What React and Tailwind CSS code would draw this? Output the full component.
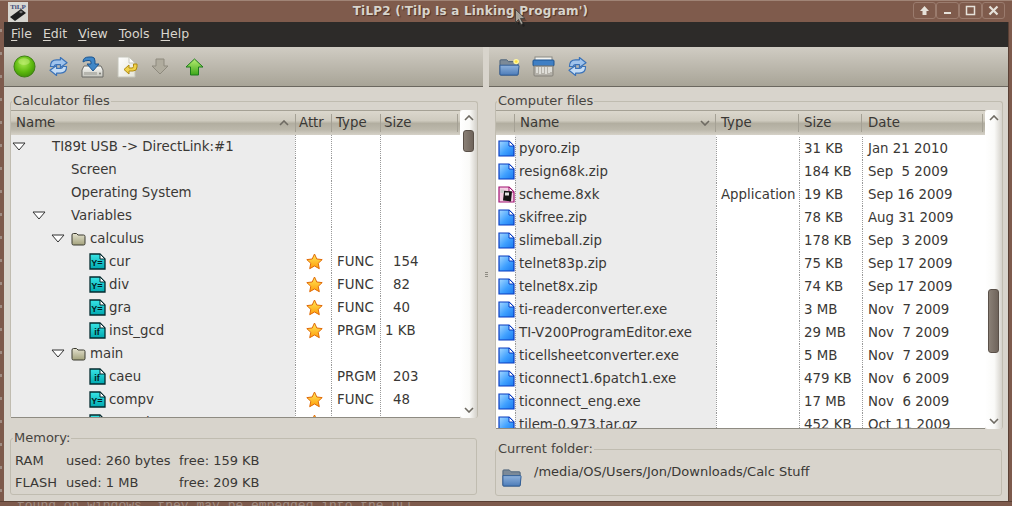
import React from "react";

function Defs() {
  return (
    <svg width="0" height="0" className="absolute">
      <defs>
        <linearGradient id="docBlue" x1="0" y1="0" x2="1" y2="1"><stop offset="0" stopColor="#a6d8ff" /><stop offset="0.55" stopColor="#3fa0ff" /><stop offset="1" stopColor="#1a78ee" /></linearGradient>
        <linearGradient id="docCyan" x1="0" y1="0" x2="0" y2="1"><stop offset="0" stopColor="#38e6e6" /><stop offset="1" stopColor="#00a8b0" /></linearGradient>
        <linearGradient id="fold" x1="0" y1="0" x2="0" y2="1"><stop offset="0" stopColor="#e4e2cf" /><stop offset="1" stopColor="#a3a27c" /></linearGradient>
        <linearGradient id="star" x1="0" y1="0" x2="0" y2="1"><stop offset="0" stopColor="#ffe95a" /><stop offset="1" stopColor="#ff9d0a" /></linearGradient>
        <radialGradient id="ball" cx="0.45" cy="0.35" r="0.7"><stop offset="0" stopColor="#a6e84c" /><stop offset="0.6" stopColor="#5cb80e" /><stop offset="1" stopColor="#3d8a08" /></radialGradient>
        <linearGradient id="arrowUp" x1="0" y1="0" x2="0" y2="1"><stop offset="0" stopColor="#b8ee72" /><stop offset="1" stopColor="#3da618" /></linearGradient>
        <linearGradient id="blueFolder" x1="0" y1="0" x2="0" y2="1"><stop offset="0" stopColor="#8fb2dc" /><stop offset="1" stopColor="#4d7cb8" /></linearGradient>
        <linearGradient id="paper" x1="0" y1="0" x2="1" y2="1"><stop offset="0" stopColor="#ffffff" /><stop offset="1" stopColor="#e4e4d8" /></linearGradient>
        <linearGradient id="drive" x1="0" y1="0" x2="0" y2="1"><stop offset="0" stopColor="#fbfbf8" /><stop offset="1" stopColor="#c4c4bc" /></linearGradient>
      </defs>
    </svg>
  );
}

function DocBlue() {
  return (
    <svg width="17" height="17" viewBox="0 0 17 17" className="shrink-0">
      <path d="M1 1h10l5 5v10H1z" fill="url(#docBlue)" stroke="#0a3cc0" strokeWidth="1.2" />
      <path d="M11 1v5h5z" fill="#ffffff" stroke="#0a3cc0" strokeWidth="1" />
    </svg>
  );
}
function DocCyan({ label }) {
  return (
    <svg width="17" height="17" viewBox="0 0 17 17" className="shrink-0">
      <path d="M1 1h10l5 5v10H1z" fill="url(#docCyan)" stroke="#042a2e" strokeWidth="1.3" />
      <path d="M11 1v5h5z" fill="#ffffff" stroke="#042a2e" strokeWidth="1" />
      <text x="8" y="13" textAnchor="middle" fontFamily="Liberation Sans, sans-serif" fontWeight="700" fontSize="9" fill="#021a1e">{label}</text>
    </svg>
  );
}
function Scheme() {
  return (
    <svg width="17" height="17" viewBox="0 0 17 17" className="shrink-0">
      <path d="M1 1h10l5 5v10H1z" fill="#f6d0e6" stroke="#a01070" strokeWidth="1.2" />
      <path d="M11 1v5h5z" fill="#ffffff" stroke="#a01070" strokeWidth="1" />
      <rect x="5.500" y="5" width="8" height="10" fill="#141414" transform="rotate(6 9 10)" />
      <rect x="7" y="6.500" width="4" height="3" fill="#e0e0e0" />
      <rect x="2.500" y="3.500" width="3.500" height="3.500" fill="#cccccc" />
    </svg>
  );
}
function Folder() {
  return (
    <svg width="15" height="14" viewBox="0 0 15 14" className="shrink-0">
      <path d="M1 3q0-1.500 1.500-1.500h3l1.500 1.500h5.500q1.500 0 1.500 1.500v7q0 1.500-1.500 1.500h-10q-1.500 0-1.500-1.500z" fill="url(#fold)" stroke="#3a3a30" strokeWidth="1" />
    </svg>
  );
}
function Star() {
  return (
    <svg width="17" height="17" viewBox="0 0 17 17">
      <path d="M8.500 1l2.300 5 5.400.6-4 3.700 1.100 5.400-4.800-2.700-4.800 2.700 1.100-5.400-4-3.700 5.400-.6z" fill="url(#star)" stroke="#e06a08" strokeWidth="1" strokeLinejoin="round" />
    </svg>
  );
}
function Tri() {
  return (
    <svg width="14" height="9" viewBox="0 0 14 9">
      <path d="M1 1h12l-6 7z" fill="#ffffff" stroke="#333333" strokeWidth="1" />
    </svg>
  );
}
function Chevron({ up, className }) {
  return (
    <svg width="10" height="6" viewBox="0 0 10 6" className={className}>
      <path d={up ? "M1 5l4-4 4 4" : "M1 1l4 4 4-4"} fill="none" stroke="#6e6a62" strokeWidth="1.600" />
    </svg>
  );
}

function Ball() {
  return (
    <svg width="23" height="23" viewBox="0 0 24 24">
      <circle cx="12" cy="12" r="11" fill="url(#ball)" stroke="#3b7d12" strokeWidth="1" />
      <ellipse cx="11.500" cy="7" rx="6" ry="3.500" fill="#c8f080" opacity="0.5" />
    </svg>
  );
}
function Refresh() {
  const top = "M1.500 10Q1.500 3 8 3H12V.5L19 6 12 11V8H8Q5.500 8 5.500 10Z";
  return (
    <svg width="19" height="19" viewBox="0 0 20 20">
      <path d={top} fill="#9fc3ec" stroke="#3a72b8" strokeWidth="1.200" strokeLinejoin="round" />
      <path d={top} transform="rotate(180 10 10)" fill="#c4dcf5" stroke="#3a72b8" strokeWidth="1.200" strokeLinejoin="round" />
    </svg>
  );
}
function DiskArrow() {
  return (
    <svg width="23" height="22" viewBox="0 0 23 22">
      <path d="M3 10h17l2 4v7H1v-7z" fill="url(#drive)" stroke="#6a6a66" strokeWidth="1" />
      <rect x="3" y="16" width="13" height="3" fill="#b5b5ae" />
      <circle cx="19" cy="17.500" r="1" fill="#7a7a74" />
      <path d="M2 6q0-5 6-5h3q3 0 3 4v3h4l-6 7-6-7h4V6q0-1.500-2-1.500H7Q4 4.500 2 6z" fill="#3f87c8" stroke="#1d5590" strokeWidth="1" strokeLinejoin="round" />
    </svg>
  );
}
function DocArrow() {
  return (
    <svg width="21" height="22" viewBox="0 0 21 22">
      <path d="M1 1h11l6 6v14H1z" fill="url(#paper)" stroke="#c4c4ba" strokeWidth="1" />
      <path d="M12 1v6h6z" fill="#ffffff" stroke="#c8c8be" strokeWidth="1" />
      <path d="M20 8v3q0 4-4 4h-4v3l-5-4.500 5-4.500v3h3q1.500 0 1.500-1.500V8z" fill="#f0d24a" stroke="#b08a10" strokeWidth="1" strokeLinejoin="round" />
    </svg>
  );
}
function ArrowDownGrey() {
  return (
    <svg width="18" height="17" viewBox="0 0 18 17">
      <path d="M5 1h8v7h4l-8 8-8-8h4z" fill="#b0ac9e" stroke="#8e8a7e" strokeWidth="1" strokeLinejoin="round" />
    </svg>
  );
}
function ArrowUpGreen() {
  return (
    <svg width="19" height="18" viewBox="0 0 19 18">
      <path d="M9.500 1l8.500 8h-4.500v8h-8V9H1z" fill="url(#arrowUp)" stroke="#1c7a1c" strokeWidth="1" strokeLinejoin="round" />
    </svg>
  );
}
function BlueFolder({ star, w, h }) {
  return (
    <svg width={w} height={h} viewBox="0 0 22 20" preserveAspectRatio="none">
      <path d="M1 3q0-1 1-1h6l2 2h9q1 0 1 1v13q0 1-1 1H2q-1 0-1-1z" fill="#7c8a98" stroke="#4a6078" strokeWidth="1" />
      <path d="M1 8h19q1 0 1 1l-1 9q0 1-1 1H2q-1 0-1-1z" fill="url(#blueFolder)" stroke="#2f5c96" strokeWidth="1" />
      {star && <circle cx="18" cy="4" r="3" fill="#fff7a0" />}
      {star && <circle cx="18" cy="4" r="1.500" fill="#ffe040" />}
    </svg>
  );
}
function Shredder() {
  return (
    <svg width="23" height="21" viewBox="0 0 23 21">
      <rect x="3" y="1" width="17" height="5" fill="#f4f4f0" stroke="#8a8a84" strokeWidth="1" />
      <rect x="1" y="4" width="21" height="6" rx="1" fill="#3f7fc4" stroke="#1f5590" strokeWidth="1" />
      <path d="M2 10h19v9q0 1-1 1H3q-1 0-1-1z" fill="#b5b2aa" stroke="#85827a" strokeWidth="1" />
      <path d="M5 11v6M8 11v7M11 11v6M14 11v7M17 11v6M19 11v5" stroke="#ecebe6" strokeWidth="1.500" />
    </svg>
  );
}
function TilpIcon() {
  return (
    <svg width="20" height="20" viewBox="0 0 20 20" className="shrink-0">
      <rect x="0" y="0" width="20" height="20" fill="#d8d6d0" />
      <text x="10" y="7" textAnchor="middle" fontFamily="Liberation Serif, serif" fontWeight="700" fontSize="7" fill="#3a4a78">TiLP</text>
      <path d="M2 15L13 7l5 4L7 19z" fill="#1e1e1e" />
      <path d="M11 10l2-1.500 2 1.500-2 1.500z" fill="#777777" />
    </svg>
  );
}
function Cursor() {
  return (
    <svg width="14" height="20" viewBox="0 0 14 20" className="absolute left-[514px] top-[8px]">
      <path d="M4 4l0 13 3-3 2 5 2-1-2-5h4z" fill="#000000" opacity="0.25" />
      <path d="M1.500 1.500v13l3-3 2.500 5 2-1-2.500-5h4.500z" fill="#a8a49c" stroke="#3c3c38" strokeWidth="0.800" />
    </svg>
  );
}

const WinBtn = ({ children }) => (
  <div className="flex h-[17px] w-[23px] items-center justify-center rounded-[3px] border border-[#9a7b6d] bg-[#7f5b4c] text-[#e6e2da]">
    {children}
  </div>
);

const HEADBG = "bg-[linear-gradient(180deg,#dbd7cd_0%,#cfcbbf_40%,#b2aea0_52%,#bcb8ab_78%,#d6d2c8_100%)]";

const Sep = () => <div className="my-[3px] w-px shrink-0 self-stretch bg-[#a5a195]" />;

function Menu() {
  const items = [["F", "ile"], ["E", "dit"], ["V", "iew"], ["T", "ools"], ["H", "elp"]];
  return (
    <div className="flex h-[25px] items-center gap-[11px] bg-[#2d2b29] pl-[7px] text-[12.5px] text-[#dad6ce]">
      {items.map(([a, b]) => (
        <span key={a}><span className="underline underline-offset-2">{a}</span>{b}</span>
      ))}
    </div>
  );
}

const TOOLBAR = "flex h-[40px] shrink-0 items-center border-b border-[#6b675f] bg-[linear-gradient(180deg,#d0ccc3_0%,#bcb8ad_50%,#a8a497_100%)]";

function Frame({ title, className, legend, children }) {
  return (
    <fieldset className={"rounded-[3px] border border-[#c0bcb0] " + className}>
      <legend className={"h-[17px] px-[1px] text-[13px] leading-[15px] text-[#47443f] " + legend}>{title}</legend>
      {children}
    </fieldset>
  );
}

function Scroll({ thumbTop, thumbH }) {
  return (
    <div className="flex w-[17px] shrink-0 flex-col items-center rounded-[3px] bg-[linear-gradient(90deg,#ffffff_0%,#fafaf8_55%,#d4d1ca_100%)]">
      <Chevron up className="mt-[5px] shrink-0" />
      <div style={{ marginTop: thumbTop, height: thumbH }} className="w-[11px] shrink-0 rounded-[3px] border border-[#5a5048] bg-[linear-gradient(90deg,#8a8076_0%,#6f645b_100%)]" />
      <Chevron className="mb-[5px] mt-auto shrink-0" />
    </div>
  );
}

const TREE = [
  { tri: 11, t: "TI89t USB -> DirectLink:#1", x: 52 },
  { t: "Screen", x: 71 },
  { t: "Operating System", x: 71 },
  { tri: 31, t: "Variables", x: 71 },
  { tri: 50, folder: true, t: "calculus", x: 71 },
  { y: "Y=", t: "cur", x: 89, star: 1, type: "FUNC", size: "154", pad: "pl-3" },
  { y: "Y=", t: "div", x: 89, star: 1, type: "FUNC", size: "82", pad: "pl-3" },
  { y: "Y=", t: "gra", x: 89, star: 1, type: "FUNC", size: "40", pad: "pl-3" },
  { y: "if", t: "inst_gcd", x: 89, star: 1, type: "PRGM", size: "1 KB", pad: "pl-1" },
  { tri: 50, folder: true, t: "main", x: 71 },
  { y: "if", t: "caeu", x: 89, type: "PRGM", size: "203", pad: "pl-3" },
  { y: "Y=", t: "compv", x: 89, star: 1, type: "FUNC", size: "48", pad: "pl-3" },
  { y: "if", t: "complet", x: 89, star: 1, type: "TIB", size: "50 KB", pad: "pl-1" },
];

function TreeRow({ r }) {
  return (
    <div className="flex h-[23px] shrink-0 items-center">
      <div className="relative flex h-full w-[284px] shrink-0 items-center bg-[#ececec]" style={{ paddingLeft: r.x - 11 }}>
        {r.tri && <span className="absolute flex items-center" style={{ left: r.tri - 10 }}><Tri /></span>}
        {r.folder && <span className="mr-[4px]"><Folder /></span>}
        {r.y && <span className="mr-[3px]"><DocCyan label={r.y} /></span>}
        <span>{r.t}</span>
      </div>
      <div className="flex h-full w-[36px] shrink-0 items-center justify-center border-l border-dotted border-[#9a9a9a] bg-white pl-[1px]">{r.star && <Star />}</div>
      <div className="flex h-full w-[49px] shrink-0 items-center border-l border-dotted border-[#9a9a9a] bg-white pl-[5px]">{r.type}</div>
      <div className={"flex h-full flex-1 items-center border-l border-dotted border-[#9a9a9a] bg-white " + (r.pad || "")}>{r.size}</div>
    </div>
  );
}

const FILES = [
  ["pyoro.zip", "", "31 KB", "Jan 21 2010"],
  ["resign68k.zip", "", "184 KB", "Sep  5 2009"],
  ["scheme.8xk", "Application", "19 KB", "Sep 16 2009", true],
  ["skifree.zip", "", "78 KB", "Aug 31 2009"],
  ["slimeball.zip", "", "178 KB", "Sep  3 2009"],
  ["telnet83p.zip", "", "75 KB", "Sep 17 2009"],
  ["telnet8x.zip", "", "74 KB", "Sep 17 2009"],
  ["ti-readerconverter.exe", "", "3 MB", "Nov  7 2009"],
  ["TI-V200ProgramEditor.exe", "", "29 MB", "Nov  7 2009"],
  ["ticellsheetconverter.exe", "", "5 MB", "Nov  7 2009"],
  ["ticonnect1.6patch1.exe", "", "479 KB", "Nov  6 2009"],
  ["ticonnect_eng.exe", "", "17 MB", "Nov  6 2009"],
  ["tilem-0.973.tar.gz", "", "452 KB", "Oct 11 2009"],
];

function FileRow({ f }) {
  const dot = "border-l border-dotted border-[#9a9a9a]";
  return (
    <div className="flex h-[23px] shrink-0 items-center">
      <div className="flex h-full w-[19px] shrink-0 items-center justify-center bg-[#ffffff] pl-[2px]">{f[4] ? <Scheme /> : <DocBlue />}</div>
      <div className={"flex h-full w-[201px] shrink-0 items-center bg-[#ececec] pl-[3px] " + dot}>{f[0]}</div>
      <div className={"flex h-full w-[83px] shrink-0 items-center bg-white pl-[4px] " + dot}>{f[1]}</div>
      <div className={"flex h-full w-[63px] shrink-0 items-center bg-white pl-[4px] " + dot}>{f[2]}</div>
      <div className={"flex h-full flex-1 items-center whitespace-pre bg-white pl-[5px] " + dot}>{f[3]}</div>
    </div>
  );
}

function HCell({ className, children }) {
  return <div className={"relative flex h-full shrink-0 items-center " + className}>{children}</div>;
}

export default function App() {
  return (
    <div className="relative flex h-[506px] w-[1012px] flex-col overflow-hidden bg-[#7d5a4c] text-[13.33px] text-[#3a3835]" style={{ fontFamily: '"DejaVu Sans", sans-serif' }}>
      <Defs />
      {/* title bar */}
      <div className="flex h-[22px] shrink-0 items-start border-t border-[#a08476] bg-[#7f5b4c]">
        <div className="ml-[8px] mt-[1px]"><TilpIcon /></div>
        <div className="flex h-[21px] flex-1 items-center justify-center pb-[2px] text-[12px] font-bold tracking-[0.2px] text-[#d8d4cc] [text-shadow:1px_1px_1px_#4c3228]">TiLP2 ('Tilp Is a Linking Program')</div>
        <div className="mr-[7px] mt-[1px] flex">
          <WinBtn><svg width="11" height="11" viewBox="0 0 11 11"><path d="M5.500 1L10 6H7.500v4h-4V6H1z" fill="#e6e2da" /></svg></WinBtn>
          <WinBtn><svg width="9" height="9" viewBox="0 0 9 9"><rect x="1" y="6" width="7" height="2" fill="#e6e2da" /></svg></WinBtn>
          <WinBtn><svg width="11" height="11" viewBox="0 0 11 11"><rect x="1.500" y="1.500" width="8" height="8" fill="none" stroke="#e6e2da" strokeWidth="1.500" /></svg></WinBtn>
          <WinBtn><svg width="11" height="11" viewBox="0 0 11 11"><path d="M1.500 1.500l8 8M9.500 1.500l-8 8" stroke="#e6e2da" strokeWidth="2.200" /></svg></WinBtn>
        </div>
      </div>

      <div className="flex min-h-0 flex-1">
        {/* desktop strip, left: slivers of the wallpaper's text */}
        <div className="w-[4px] shrink-0 bg-[repeating-linear-gradient(180deg,#7d5a4c_0px,#7d5a4c_7px,#a08c82_7px,#a08c82_10px,#7d5a4c_10px,#7d5a4c_23px)] bg-[length:2px_100%] bg-no-repeat" />

        {/* window */}
        <div className="flex min-w-0 flex-1 flex-col bg-[#d8d4cc]">
          <Menu />
          <div className="flex min-h-0 flex-1">
            {/* left pane */}
            <div className="flex w-[479px] shrink-0 flex-col">
              <div className={TOOLBAR + " gap-[13px] pl-[9px]"}>
                <Ball />
                <Refresh />
                <DiskArrow />
                <DocArrow />
                <ArrowDownGrey />
                <span className="ml-[3px] flex"><ArrowUpGreen /></span>
              </div>
              <Frame title="Calculator files" legend="ml-[1px]" className="ml-[6px] mt-[6px] w-[468px] border-b-0">
                <div className="flex h-[308px]">
                  <div className="flex min-w-0 flex-1 flex-col overflow-hidden border-b border-[#8e8b82]">
                    <div className={"flex h-[25px] shrink-0 items-center border-t border-[#a5a195] " + HEADBG}>
                      <HCell className="w-[284px] justify-between pl-[5px] pr-[6px]">Name <Chevron up /></HCell>
                      <Sep />
                      <HCell className="w-[35px] pl-[3px]">Attr</HCell>
                      <Sep />
                      <HCell className="w-[48px] pl-[4px]">Type</HCell>
                      <Sep />
                      <HCell className="w-[76px] pl-[3px]">Size</HCell>
                      <Sep />
                    </div>
                    {TREE.map((r) => <TreeRow key={r.t} r={r} />)}
                  </div>
                  <Scroll thumbTop={9} thumbH={22} />
                </div>
              </Frame>
              <Frame title="Memory:" legend="ml-[2px]" className="ml-[6px] mt-[12px] h-[65px] w-[467px]">
                <div className="grid grid-cols-[51px_113px_1fr] pl-[4px] pt-[3px] text-[13px] leading-[22px]">
                  <span>RAM</span><span>used: 260 bytes</span><span>free: 159 KB</span>
                  <span>FLASH</span><span>used: 1 MB</span><span>free: 209 KB</span>
                </div>
              </Frame>
            </div>

            {/* sash */}
            <div className="flex w-[6px] shrink-0 flex-col items-center justify-center gap-[1px]">
              <span className="h-px w-[3px] bg-[#8e8b82]" />
              <span className="h-px w-[3px] bg-[#8e8b82]" />
              <span className="h-px w-[3px] bg-[#8e8b82]" />
            </div>

            {/* right pane */}
            <div className="flex min-w-0 flex-1 flex-col">
              <div className={TOOLBAR + " gap-[12px] pl-[10px]"}>
                <BlueFolder star w={21} h={18} />
                <Shredder />
                <span className="ml-[1px] flex"><Refresh /></span>
              </div>
              <Frame title="Computer files" legend="ml-[1px]" className="ml-[6px] mt-[6px] w-[508px] border-b-0">
                <div className="flex h-[319px]">
                  <div className="flex min-w-0 flex-1 flex-col overflow-hidden border-b border-[#8e8b82]">
                    <div className={"flex h-[25px] shrink-0 items-center border-t border-[#a5a195] " + HEADBG}>
                      <HCell className="w-[18px]" />
                      <Sep />
                      <HCell className="w-[200px] justify-between pl-[5px] pr-[5px]">Name <Chevron /></HCell>
                      <Sep />
                      <HCell className="w-[82px] pl-[5px]">Type</HCell>
                      <Sep />
                      <HCell className="w-[62px] pl-[5px]">Size</HCell>
                      <Sep />
                      <HCell className="w-[120px] pl-[6px]">Date</HCell>
                      <Sep />
                    </div>
                    <div className="flex h-[2px] shrink-0">
                      <div className="w-[19px] bg-white" />
                      <div className="w-[201px] bg-[#ececec]" />
                      <div className="flex-1 bg-white" />
                    </div>
                    {FILES.map((f) => <FileRow key={f[0]} f={f} />)}
                  </div>
                  <Scroll thumbTop={168} thumbH={64} />
                </div>
              </Frame>
              <Frame title="Current folder:" legend="ml-[1px]" className="ml-[6px] mt-[12px] h-[55px] w-[507px]">
                <div className="flex items-start pl-[6px] pt-[5px]">
                  <span className="mt-[5px] flex"><BlueFolder w={20} h={19} /></span>
                  <span className="ml-[12px] text-[13px] leading-[18px]">/media/OS/Users/Jon/Downloads/Calc Stuff</span>
                </div>
              </Frame>
            </div>
          </div>
        </div>

        {/* desktop strip, right */}
        <div className="w-[4px] shrink-0 border-l border-[#5a4034]" />
      </div>

      {/* desktop strip, bottom */}
      <div className="h-[5px] shrink-0 overflow-hidden whitespace-pre border-t border-[#5a4034] pl-[17px] font-['Liberation_Mono'] text-[13px] leading-[8px] text-[#a08c82]">found on windows, they may be embedded into the DLL.</div>
      <Cursor />
    </div>
  );
}
